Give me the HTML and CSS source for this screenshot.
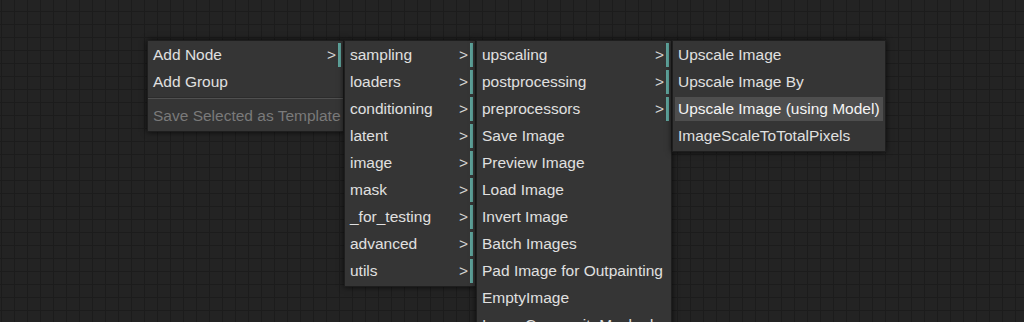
FILE: index.html
```html
<!DOCTYPE html>
<html lang="en">
<head>
    <meta charset="UTF-8">
    <title>Graph Canvas Menu</title>
    <link rel="stylesheet" href="styles.css">
</head>
<body>
    <div class="canvas">
        <div class="menu menu-root">
            <div class="entry has-sub">Add Node</div>
            <div class="entry">Add Group</div>
            <div class="separator"></div>
            <div class="entry disabled">Save Selected as Template</div>
        </div>

        <div class="menu menu-categories">
            <div class="entry has-sub">sampling</div>
            <div class="entry has-sub">loaders</div>
            <div class="entry has-sub">conditioning</div>
            <div class="entry has-sub">latent</div>
            <div class="entry has-sub">image</div>
            <div class="entry has-sub">mask</div>
            <div class="entry has-sub">_for_testing</div>
            <div class="entry has-sub">advanced</div>
            <div class="entry has-sub">utils</div>
        </div>

        <div class="menu menu-image">
            <div class="entry has-sub">upscaling</div>
            <div class="entry has-sub">postprocessing</div>
            <div class="entry has-sub">preprocessors</div>
            <div class="entry">Save Image</div>
            <div class="entry">Preview Image</div>
            <div class="entry">Load Image</div>
            <div class="entry">Invert Image</div>
            <div class="entry">Batch Images</div>
            <div class="entry">Pad Image for Outpainting</div>
            <div class="entry">EmptyImage</div>
            <div class="entry">ImageCompositeMasked</div>
            <div class="entry">Image Blend</div>
        </div>

        <div class="menu menu-upscaling">
            <div class="entry">Upscale Image</div>
            <div class="entry">Upscale Image By</div>
            <div class="entry active">Upscale Image (using Model)</div>
            <div class="entry">ImageScaleToTotalPixels</div>
        </div>
    </div>
</body>
</html>
```
FILE: styles.css
```css
* {
    box-sizing: border-box;
}
body {
    margin: 0;
    overflow: hidden;
    font-family: "Liberation Sans", Arial, sans-serif;
}
.canvas {
    position: relative;
    width: 1024px;
    height: 322px;
    overflow: hidden;
    background-color: #232323;
    background-image:
        linear-gradient(to right, #1c1c1c 1px, transparent 1px),
        linear-gradient(to bottom, #1c1c1c 1px, transparent 1px);
    background-size: 13px 13px;
    background-position: 1px 11px;
}

/* context menus sit over the canvas */
.menu {
    position: absolute;
    top: 40px;
    padding: 2px 2px 0 2px;
    background-color: #353535;
    border: 1px solid #1e1e1e;
    box-shadow: 0 0 6px rgba(0, 0, 0, 0.75);
}
.menu-root {
    left: 147px;
    width: 197px;
}
.menu-categories {
    left: 344px;
    width: 132px;
}
.menu-image {
    left: 476px;
    width: 196px;
}
.menu-upscaling {
    left: 672px;
    width: 214px;
}

.entry {
    display: flex;
    justify-content: space-between;
    align-items: center;
    height: 24px;
    margin-bottom: 3px;
    padding: 0 2px 1px 3px;
    font-size: 15.5px;
    color: #e0e0e0;
    white-space: nowrap;
}
.entry.has-sub {
    border-right: 3px solid #5fa59d;
}
.entry.has-sub::after {
    content: ">";
    color: #d6d6d6;
}
.entry.disabled {
    color: #7a7a7a;
}
.entry.active {
    background-color: #4e4e4e;
    color: #f4f4f4;
}
.separator {
    height: 2px;
    margin: 1px -2px 5px -2px;
    border-top: 1px solid #2c2c2c;
    border-bottom: 1px solid #505050;
}
```
